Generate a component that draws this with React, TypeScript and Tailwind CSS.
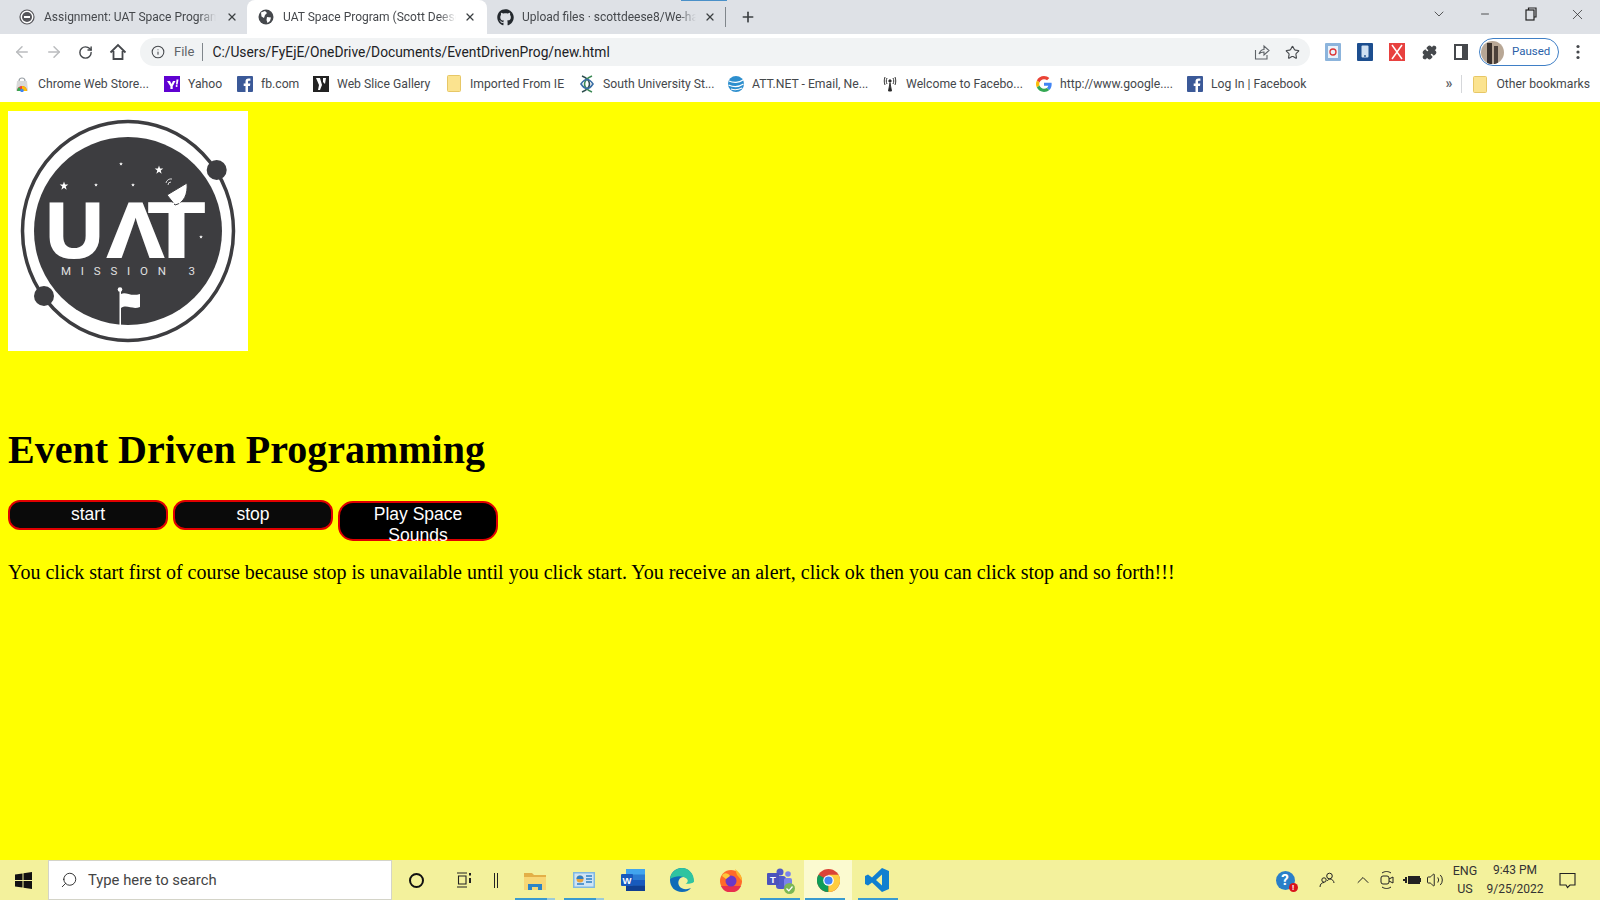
import React from "react";
import { ArrowLeft, ArrowRight, RotateCw, Info, Star, Puzzle, X, Plus, Minus, ChevronDown, ChevronUp, Search, Volume2 } from "lucide-react";
import { FaGithub } from "react-icons/fa";

const ui = "font-['Roboto','Noto_Sans',sans-serif]";

function Globe() {
  return (
    <svg width="16" height="16" viewBox="0 0 16 16">
      <circle cx="8" cy="8" r="7.5" fill="#45484c" />
      <path d="M3 3.5 L7 2 L9 4 L7 6 L6 9 L3.5 7.5 Z M9 8 L13 8.5 L12 12 L9.5 14 L8.5 11 Z" fill="#fff" />
    </svg>
  );
}

function UatTabIcon() {
  return (
    <svg width="16" height="16" viewBox="0 0 16 16">
      <circle cx="8" cy="8" r="7" fill="#fff" stroke="#55555a" strokeWidth="1.2" />
      <circle cx="8" cy="8" r="5" fill="#55555a" />
      <rect x="5" y="7" width="6" height="2" fill="#fff" />
    </svg>
  );
}

function Tab({ w, pl, gap, icon, title, active, textW, xGap }: { w: string; pl: string; gap: string; icon: React.ReactNode; title: string; active?: boolean; textW: string; xGap: string }) {
  return (
    <div className={`${w} ${pl} h-[34px] shrink-0 flex items-center ${active ? "bg-white rounded-t-lg" : ""}`}>
      <div className="shrink-0 flex">{icon}</div>
      <div className={`${textW} ${gap} overflow-hidden whitespace-nowrap text-[12px] text-[#45484c] [mask-image:linear-gradient(to_right,black_90%,transparent)]`}>{title}</div>
      <X size={12} strokeWidth={2.5} className={`${xGap} text-[#3c4043] shrink-0`} />
    </div>
  );
}

function Folder() {
  return (
    <svg width="14" height="17" viewBox="0 0 14 17">
      <rect x="0.5" y="0.5" width="13" height="16" rx="1" fill="#fbe38f" stroke="#e7c766" />
    </svg>
  );
}

function FbIcon() {
  return (
    <svg width="16" height="16" viewBox="0 0 16 16">
      <rect width="16" height="16" rx="1" fill="#3b5998" />
      <path d="M11 16 V10 H13 L13.3 7.5 H11 V6 C11 5.2 11.3 4.8 12.2 4.8 H13.4 V2.6 H11.6 C9.4 2.6 8.5 3.8 8.5 5.8 V7.5 H6.7 V10 H8.5 V16 Z" fill="#fff" />
    </svg>
  );
}

const bookmarks: { icon: React.ReactNode; label: string; w: string; ml: string }[] = [
  {
    label: "Chrome Web Store...", w: "w-[109px]", ml: "ml-[14px]",
    icon: (
      <svg width="14" height="16" viewBox="0 0 14 16">
        <path d="M2 5 L12 5 L13 15 L1 15 Z" fill="#d9d9d9" />
        <path d="M4 5 C4 1 10 1 10 5" fill="none" stroke="#9aa0a6" strokeWidth="1.2" />
        <path d="M2 15 A5 5 0 0 1 12 15 Z" fill="#ea4335" />
        <path d="M7 10 A5 5 0 0 1 12 15 L7 15 Z" fill="#fbbc05" />
        <path d="M2 15 A5 5 0 0 1 4 11 L7 15 Z" fill="#34a853" />
        <circle cx="7" cy="14.5" r="1.7" fill="#4285f4" />
      </svg>
    ),
  },
  {
    label: "Yahoo", w: "w-[33px]", ml: "ml-[17px]",
    icon: (
      <svg width="16" height="16" viewBox="0 0 16 16">
        <rect width="16" height="16" fill="#5f01d1" />
        <path d="M3 5 H6 L7.5 8 L9 5 H11.5 L8.7 10.2 V13 H6.4 V10.2 Z M12.5 3.5 H14.5 L13.6 8.5 H12 Z" fill="#fff" />
        <circle cx="12.6" cy="10" r="1" fill="#fff" />
      </svg>
    ),
  },
  { label: "fb.com", w: "w-[36px]", ml: "ml-[16px]", icon: <FbIcon /> },
  {
    label: "Web Slice Gallery", w: "w-[92px]", ml: "ml-[16px]",
    icon: (
      <svg width="16" height="16" viewBox="0 0 16 16">
        <rect width="16" height="16" fill="#222" />
        <path d="M3 2 L7 2 L9 9 L7 14 L5 14 L6 9 Z M10 2 L13 2 L12 8 L10 6 Z" fill="#fff" />
      </svg>
    ),
  },
  { label: "Imported From IE", w: "w-[93px]", ml: "ml-[17px]", icon: <Folder /> },
  {
    label: "South University St...", w: "w-[110px]", ml: "ml-[16px]",
    icon: (
      <svg width="16" height="18" viewBox="0 0 16 18" fill="none" strokeWidth="1.6">
        <path d="M3 1 C13 5 13 13 3 17" stroke="#2f4f4f" />
        <path d="M13 1 C3 5 3 13 13 17" stroke="#3c8a55" />
        <path d="M2 9 C6 3 10 3 14 9 C10 15 6 15 2 9 Z" stroke="#3a6ea5" />
      </svg>
    ),
  },
  {
    label: "ATT.NET - Email, Ne...", w: "w-[113px]", ml: "ml-[15px]",
    icon: (
      <svg width="16" height="16" viewBox="0 0 16 16">
        <circle cx="8" cy="8" r="8" fill="#2e8fce" />
        <path d="M1 5 C5 7 11 7 15 4 M0.5 9 C5 11 11 11 15.5 8 M3 13 C6 14 10 14 14 12" fill="none" stroke="#fff" strokeWidth="1.1" />
      </svg>
    ),
  },
  {
    label: "Welcome to Facebo...", w: "w-[113px]", ml: "ml-[17px]",
    icon: (
      <svg width="16" height="16" viewBox="0 0 16 16" fill="none" stroke="#333" strokeWidth="1">
        <path d="M8 7 L6.5 15 H9.5 Z" fill="#222" />
        <circle cx="8" cy="5" r="1.2" fill="#222" />
        <path d="M5 2 C4 4 4 6 5 8 M11 2 C12 4 12 6 11 8 M3 1 C2 4 2 6 3 9 M13 1 C14 4 14 6 13 9" />
      </svg>
    ),
  },
  {
    label: "http://www.google....", w: "w-[111px]", ml: "ml-[17px]",
    icon: (
      <svg width="16" height="16" viewBox="0 0 48 48">
        <path fill="#EA4335" d="M24 9.5c3.5 0 6.7 1.2 9.2 3.600l6.900-6.900C35.900 2.400 30.400 0 24 0 14.600 0 6.500 5.400 2.600 13.200l8 6.200C12.500 13.700 17.800 9.500 24 9.500z" />
        <path fill="#4285F4" d="M47 24.500c0-1.600-.1-3.100-.4-4.500H24v9h12.900c-.6 3-2.200 5.500-4.700 7.200l7.700 6C44.400 37.900 47 31.800 47 24.500z" />
        <path fill="#FBBC05" d="M10.600 28.600C10.100 27.100 9.800 25.600 9.800 24s.3-3.100.8-4.600l-8-6.200C.9 16.500 0 20.100 0 24s.9 7.500 2.600 10.800l8-6.200z" />
        <path fill="#34A853" d="M24 48c6.500 0 11.900-2.100 15.900-5.800l-7.700-6c-2.200 1.500-4.900 2.300-8.200 2.300-6.200 0-11.500-4.200-13.400-9.900l-8 6.200C6.500 42.600 14.600 48 24 48z" />
      </svg>
    ),
  },
  { label: "Log In | Facebook", w: "w-[93px]", ml: "ml-[16px]", icon: <FbIcon /> },
];

function Logo() {
  const star = (x: number, y: number, s: number) => {
    const pts: string[] = [];
    for (let i = 0; i < 10; i++) {
      const r = i % 2 === 0 ? s : s * 0.4;
      const a = -Math.PI / 2 + (i * Math.PI) / 5;
      pts.push(`${x + r * Math.cos(a)},${y + r * Math.sin(a)}`);
    }
    return <polygon points={pts.join(" ")} fill="#fff" />;
  };
  return (
    <svg width="240" height="240" viewBox="0 0 240 240" className="block bg-white">
      <ellipse cx="120" cy="120" rx="105.500" ry="109.500" fill="none" stroke="#3d3d40" strokeWidth="3.500" />
      <circle cx="120" cy="120" r="94" fill="#3d3d40" />
      <circle cx="208.700" cy="59" r="10" fill="#3d3d40" />
      <circle cx="36" cy="185" r="10" fill="#3d3d40" />
      {star(56, 75, 4.500)}
      {star(151, 59, 4.500)}
      {star(113, 53, 2)}
      {star(88, 74, 2)}
      {star(125, 74, 2)}
      {star(193, 126, 2)}
      <g fill="#fff" stroke="#fff" strokeWidth="2.200" fontFamily="'Liberation Sans', sans-serif" fontWeight="700" fontSize="77">
        <text x="38" y="146" textLength="57" lengthAdjust="spacingAndGlyphs">U</text>
        <text x="99.500" y="146" textLength="56" lengthAdjust="spacingAndGlyphs">Λ</text>
        <text x="140.500" y="146" textLength="56" lengthAdjust="spacingAndGlyphs">T</text>
      </g>
      <path d="M159 84 L179 72 C180 83 176 92 167 94 Z" fill="#fff" stroke="#3d3d40" strokeWidth="1" />
      <path d="M166 92 L160 97 M171 91 L176 97" stroke="#fff" strokeWidth="1.500" />
      <path d="M158 72 A5 5 0 0 1 164 68 M160 74 A3 3 0 0 1 163 71" fill="none" stroke="#fff" strokeWidth="0.800" />
      <text x="53" y="164" textLength="134" fill="#e0e0e0" fontFamily="'Roboto', sans-serif" fontSize="11.500">MISSION 3</text>
      <rect x="111.500" y="180" width="1.500" height="39" fill="#fff" />
      <circle cx="112" cy="178.500" r="2.300" fill="#fff" />
      <path d="M113 183 C118 180 122 186 132 183 L132 196 C124 199 119 193 113 197 Z" fill="#fff" />
    </svg>
  );
}

function Slot({ w, children, className = "" }: { w: string; children?: React.ReactNode; className?: string }) {
  return <div className={`${w} h-full shrink-0 flex items-center justify-center ${className}`}>{children}</div>;
}

function Underlined({ w, children, bar, rest, highlight }: { w: string; children: React.ReactNode; bar?: string; rest?: boolean; highlight?: boolean }) {
  return (
    <div className={`${w} h-full shrink-0 flex items-center justify-center relative ${highlight ? "bg-[#fbfad0]" : ""}`}>
      {children}
      {bar && (
        <div className={`absolute bottom-0 ${bar} h-[2px] bg-[#3a9bd0] flex justify-end`}>
          {rest && <div className="w-[8px] h-full bg-[#9ccbd8]" />}
        </div>
      )}
    </div>
  );
}

export default function App() {
  return (
    <div className={`w-[1600px] h-[900px] flex flex-col overflow-hidden ${ui}`}>
      {/* tab strip */}
      <div className="h-[34px] shrink-0 bg-[#dee1e6] flex items-center relative">
        <div className="absolute top-0 left-[681px] w-[46px] h-[1px] bg-[#4a90c8]" />
        <Tab w="w-[247px]" pl="pl-[19px]" gap="ml-[9px]" xGap="ml-[10px]" icon={<UatTabIcon />} title="Assignment: UAT Space Program" textW="w-[172px]" />
        <Tab w="w-[240px]" pl="pl-[11px]" gap="ml-[9px]" xGap="ml-[8px]" active icon={<Globe />} title="UAT Space Program (Scott Deese" textW="w-[173px]" />
        <Tab w="w-[238px]" pl="pl-[10px]" gap="ml-[8px]" xGap="ml-[8px]" icon={<FaGithub size={17} className="text-[#24292e]" />} title="Upload files · scottdeese8/We-ha" textW="w-[174px]" />
        <div className="w-[1px] h-[20px] bg-[#80868b]" />
        <Plus size={16} strokeWidth={2.5} className="ml-[14px] text-[#3c4043]" />
        <div className="flex-1" />
        <Slot w="w-[46px]"><ChevronDown size={16} strokeWidth={1.2} className="text-[#333] -mt-[6px]" /></Slot>
        <Slot w="w-[46px]"><Minus size={12} strokeWidth={1.5} className="text-[#222] -mt-[6px]" /></Slot>
        <Slot w="w-[46px]">
          <svg width="12" height="14" viewBox="0 0 12 14" fill="none" stroke="#222" strokeWidth="1.200" className="-mt-[6px]"><rect x="1" y="3" width="8" height="10" fill="#dee1e6" /><path d="M3.500 3 V1 H11 V10 H9" /></svg>
        </Slot>
        <Slot w="w-[46px]"><X size={17} strokeWidth={1} className="text-[#222] -mt-[6px]" /></Slot>
      </div>

      {/* toolbar */}
      <div className="h-[36px] shrink-0 bg-white flex items-center">
        <Slot w="w-[43px]"><ArrowLeft size={18} className="text-[#babcbe]" strokeWidth={2} /></Slot>
        <Slot w="w-[22px]"><ArrowRight size={18} className="text-[#babcbe]" strokeWidth={2} /></Slot>
        <Slot w="w-[41px]"><RotateCw size={15} className="text-[#45484c]" strokeWidth={2.300} /></Slot>
        <Slot w="w-[24px]">
          <svg width="18" height="18" viewBox="0 0 18 18" fill="none" stroke="#45484c" strokeWidth="1.800"><path d="M1.500 9.500 L9 2 L16.500 9.500 M4.500 8 V16 H13.500 V8" /></svg>
        </Slot>
        <div className="ml-[10px] w-[1170px] h-[28px] rounded-full bg-[#f1f3f4] flex items-center">
          <Info size={14} className="ml-[11px] text-[#45484c]" strokeWidth={1.800} />
          <span className="ml-[9px] text-[13px] text-[#5f6368]">File</span>
          <div className="ml-[8px] w-[1px] h-[18px] bg-[#80868b]" />
          <span className="ml-[9px] text-[13.800px] text-[#202124]">C:/Users/FyEjE/OneDrive/Documents/EventDrivenProg/new.html</span>
          <div className="flex-1" />
          <svg width="16" height="16" viewBox="0 0 16 16" fill="none" stroke="#5f6368" strokeWidth="1.100" className="mr-[15px]"><path d="M1.500 6 V15 H13 V11 M5 10 C6 7 8 5.500 10 5.500 V2 L15 6.500 L10 11 V8 C8 8 6 8.500 5 10 Z" /></svg>
          <Star size={15} className="mr-[10px] text-[#45484c]" strokeWidth={1.800} />
        </div>
        <Slot w="w-[32px] ml-[7px]">
          <svg width="16" height="18" viewBox="0 0 16 18"><rect width="16" height="18" rx="1" fill="#8cb4dc" /><rect x="3" y="3" width="10" height="12" fill="#eaf2fa" /><circle cx="8" cy="9" r="3" fill="none" stroke="#d33" strokeWidth="1.300" /></svg>
        </Slot>
        <Slot w="w-[31px]">
          <svg width="16" height="18" viewBox="0 0 16 18"><rect width="16" height="18" rx="1" fill="#1c4e8f" /><rect x="4.500" y="2.500" width="7" height="12" rx="1" fill="#cfe0f2" /><circle cx="8" cy="13" r="0.900" fill="#1c4e8f" /></svg>
        </Slot>
        <Slot w="w-[33px]">
          <svg width="16" height="18" viewBox="0 0 16 18"><rect width="16" height="18" fill="#e8413f" /><path d="M3 2 L8 9 L13 2 M3 16 L8 9 L13 16" fill="none" stroke="#fff" strokeWidth="1.500" /></svg>
        </Slot>
        <Slot w="w-[32px]"><Puzzle size={15} className="text-[#45484c] fill-[#45484c]" /></Slot>
        <Slot w="w-[32px]">
          <svg width="14" height="16" viewBox="0 0 14 16"><rect x="1" y="1" width="12" height="14" fill="#fff" stroke="#45484c" strokeWidth="2" /><rect x="8" y="1" width="5" height="14" fill="#45484c" /></svg>
        </Slot>
        <div className="ml-[2px] w-[80px] h-[28px] rounded-full border border-[#3f7fc6] flex items-center shrink-0">
          <svg width="23" height="23" viewBox="0 0 23 23" className="ml-[1px] rounded-full"><rect width="23" height="23" fill="#b8a795" /><rect x="6" y="2" width="5" height="21" fill="#3a312c" /><rect x="13" y="5" width="4" height="18" fill="#4c413a" /></svg>
          <span className="ml-[8px] text-[11.500px] text-[#2a5fa8]">Paused</span>
        </div>
        <Slot w="w-[37px]">
          <svg width="4" height="16" viewBox="0 0 4 16" fill="#45484c"><circle cx="2" cy="2.500" r="1.600" /><circle cx="2" cy="8" r="1.600" /><circle cx="2" cy="13.500" r="1.600" /></svg>
        </Slot>
      </div>

      {/* bookmarks */}
      <div className="h-[32px] shrink-0 bg-white flex items-center pb-[4px] text-[12.200px] text-[#45484c]">
        {bookmarks.map((b) => (
          <div key={b.label} className={`flex items-center shrink-0 ${b.ml}`}>
            <div className="w-[16px] flex justify-center">{b.icon}</div>
            <span className={`${b.w} ml-[8px] whitespace-nowrap`}>{b.label}</span>
          </div>
        ))}
        <div className="flex-1" />
        <span className="text-[14px] font-bold text-[#5f6368] leading-none -mt-[2px]">»</span>
        <div className="ml-[9px] w-[1px] h-[18px] bg-[#d5d7da]" />
        <div className="ml-[11px]"><Folder /></div>
        <span className="ml-[9px] mr-[10px] whitespace-nowrap">Other bookmarks</span>
      </div>

      {/* page */}
      <div className="flex-1 min-h-0 bg-[#ffff00] text-black font-['Liberation_Serif',serif] pt-[9px] px-[8px]">
        <Logo />
        <h1 className="mt-[76px] text-[40px] font-bold leading-[46px]">Event Driven Programming</h1>
        <div className="mt-[27px] flex items-start gap-[5px] font-['Liberation_Sans',sans-serif] text-white text-[17.500px] text-center">
          <button className="w-[160px] h-[30px] rounded-[12px] border-2 border-[#e00000] bg-[#0a0a0a] leading-[20px] pt-[1px] pb-[3px]">start</button>
          <button className="w-[160px] h-[30px] rounded-[12px] border-2 border-[#e00000] bg-[#0a0a0a] leading-[20px] pt-[1px] pb-[3px]">stop</button>
          <button className="mt-[1px] w-[160px] h-[40px] rounded-[15px] border-2 border-[#e00000] bg-black leading-[20.700px] self-start pt-[1px] flex flex-col items-center justify-start">
            <span className="block">Play Space</span>
            <span className="block">Sounds</span>
          </button>
        </div>
        <p className="mt-[20px] text-[20px] leading-[23px]">You click start first of course because stop is unavailable until you click start. You receive an alert, click ok then you can click stop and so forth!!!</p>
      </div>

      {/* taskbar */}
      <div className="h-[40px] shrink-0 bg-[#f3f19c] flex items-center">
        <Slot w="w-[48px] pr-[1px]">
          <svg width="17" height="17" viewBox="0 0 17 17" fill="#111"><path d="M0 2.500 L7.500 1.400 V8 H0 Z M8.500 1.200 L17 0 V8 H8.500 Z M0 9 H7.500 V15.600 L0 14.500 Z M8.500 9 H17 V17 L8.500 15.800 Z" /></svg>
        </Slot>
        <div className="w-[344px] h-[40px] bg-white border border-[#d4d4c8] flex items-center shrink-0">
          <Search size={18} strokeWidth={1.200} className="ml-[11px] text-[#222] -scale-x-100" />
          <span className="ml-[10px] text-[14.800px] text-[#444]">Type here to search</span>
        </div>
        <Slot w="w-[48px]">
          <div className="w-[15px] h-[15px] rounded-full border-[2.500px] border-[#111]" />
        </Slot>
        <Slot w="w-[48px]">
          <svg width="16" height="16" viewBox="0 0 16 16" fill="none" stroke="#222" strokeWidth="1.100"><path d="M1 1 H11 M1 15 H11 M2.500 4 H10 V12 H2.500 Z" /><rect x="13" y="1" width="2" height="2.500" fill="#222" stroke="none" /><rect x="13" y="6" width="2" height="5" fill="#222" stroke="none" /></svg>
        </Slot>
        <Slot w="w-[16px]">
          <div className="w-[4px] h-[15px] border-x border-[#222]" />
        </Slot>
        <div className="w-[7px] shrink-0" />
        <Underlined w="w-[48px]" bar="left-[4px] right-[4px]" rest>
          <svg width="22" height="19" viewBox="0 0 22 19"><path d="M0 2 H8 L10 4 H22 V8 H0 Z" fill="#e3b048" /><path d="M0 6 H22 V19 H0 Z" fill="#f8d775" /><path d="M4 13 H18 V19 H14 V16 H8 V19 H4 Z" fill="#2e84c6" /></svg>
        </Underlined>
        <Underlined w="w-[49px]" bar="left-[5px] right-[4px]" rest>
          <svg width="22" height="17" viewBox="0 0 22 17"><rect width="22" height="16" fill="#7fb8e0" /><rect x="1.500" y="1.500" width="19" height="13" fill="#cfe4f5" /><circle cx="7" cy="7" r="3.500" fill="#e8a33d" /><path d="M3.500 7 A3.500 3.500 0 0 1 10.500 7 Z" fill="#2f7fc4" /><path d="M13 4 H19 M13 7 H19 M13 10 H19 M4 12 H11" stroke="#2f7fc4" strokeWidth="1.300" /></svg>
        </Underlined>
        <Underlined w="w-[49px]">
          <svg width="24" height="22" viewBox="0 0 24 22"><rect x="5" y="0" width="19" height="22" rx="1" fill="#2b7cd3" /><rect x="5" y="0" width="19" height="5.500" fill="#41a5ee" /><rect x="5" y="11" width="19" height="5.500" fill="#185abd" /><rect x="5" y="16.500" width="19" height="5.500" fill="#103f91" /><rect x="0" y="5" width="12" height="12" rx="1" fill="#185abd" /><text x="6" y="14.500" fontSize="9.500" fontWeight="700" fill="#fff" textAnchor="middle" fontFamily="'Liberation Sans', sans-serif">W</text></svg>
        </Underlined>
        <Underlined w="w-[49px]">
          <svg width="24" height="24" viewBox="0 0 24 24">
            <path d="M23.500 14 C23.500 5 18 0 12 0 C5 0 0 5 0 12 C0 19 5 24 12 24 C16 24 19 22.500 21 20 C17 22 11 21.500 9 17.500 C7 13 10 8.500 14 9 C17 9.500 19 11 18.500 14 Z" fill="#0f6cb8" />
            <path d="M0 11 C1 4 6 0 12 0 C19 0 24 6 24 13 C24 15.500 19 16 15.500 15.500 C18 15 18.500 12 16.500 10.500 C13 7.500 6 7 0 11 Z" fill="#2fc4a0" />
          </svg>
        </Underlined>
        <Underlined w="w-[49px]">
          <svg width="24" height="24" viewBox="0 0 24 24"><circle cx="12" cy="13" r="11" fill="#ff6a2a" /><path d="M2 18 A11 11 0 0 0 22 18 Z" fill="#e8304f" /><path d="M16 1 C20 4 23 8 23 13 L18 7 Z" fill="#ffb52a" /><circle cx="12" cy="13" r="5.500" fill="#6a38c8" /><path d="M3 8 C5 4 9 5 11 8 L7 11 Z" fill="#ffc83a" /></svg>
        </Underlined>
        <Underlined w="w-[49px]" bar="left-[5px] right-[4px]">
          <div className="relative">
            <svg width="26" height="24" viewBox="0 0 26 24"><circle cx="13" cy="4" r="3.500" fill="#5059c9" /><circle cx="21" cy="6" r="2.800" fill="#7b83eb" /><rect x="9" y="8" width="10" height="13" rx="3" fill="#5059c9" /><rect x="17" y="10" width="8" height="9" rx="2" fill="#7b83eb" /><rect x="0" y="5" width="12" height="12" rx="1" fill="#4b53bc" /><text x="6" y="14.500" fontSize="9.500" fontWeight="700" fill="#fff" textAnchor="middle" fontFamily="'Liberation Sans', sans-serif">T</text></svg>
            <svg width="11" height="11" viewBox="0 0 11 11" className="absolute -right-[2px] -bottom-[2px]"><circle cx="5.500" cy="5.500" r="5.500" fill="#7cb854" /><path d="M2.500 5.500 L4.800 7.800 L8.500 3.500" fill="none" stroke="#fff" strokeWidth="1.300" /></svg>
          </div>
        </Underlined>
        <Underlined w="w-[48px]" bar="left-[1px] right-[7px]" highlight>
          <svg width="23" height="23" viewBox="0 0 48 48"><circle cx="24" cy="24" r="24" fill="#db4437" /><path d="M24 24 L3.200 12 A24 24 0 0 0 24 48 Z" fill="#0f9d58" /><path d="M24 24 L24 48 A24 24 0 0 0 44.800 12 L24 12 Z" fill="#ffcd40" /><circle cx="24" cy="24" r="11" fill="#fff" /><circle cx="24" cy="24" r="8.500" fill="#4285f4" /></svg>
        </Underlined>
        <Underlined w="w-[50px]" bar="left-[6px] right-[4px]">
          <svg width="24" height="24" viewBox="0 0 24 24"><path d="M17 0 L24 3 V21 L17 24 L7 14.500 L3 17.500 L0 16 V8 L3 6.500 L7 9.500 Z M17 6.500 L11 12 L17 17.500 Z" fill="#0f7fd0" fillRule="evenodd" /></svg>
        </Underlined>
        <div className="flex-1" />
        <Slot w="w-[30px]">
          <div className="relative">
            <div className="w-[19px] h-[19px] rounded-full bg-[#2a7fc8] text-white text-[15px] font-bold leading-[19px] text-center">?</div>
            <div className="absolute -right-[3px] -bottom-[2px] w-[9px] h-[9px] rounded-full bg-[#d8141c] text-white text-[8px] font-bold leading-[9px] text-center">!</div>
          </div>
        </Slot>
        <Slot w="w-[30px] ml-[12px]">
          <svg width="16" height="16" viewBox="0 0 16 16" fill="none" stroke="#222" strokeWidth="1"><circle cx="10.500" cy="4" r="2.800" /><circle cx="5" cy="8" r="2.200" /><path d="M1 15 C1 12 3 10.500 5 10.500 M8 9 C9 8 10 7 11 7 C13 7 15 9 15 11" /></svg>
        </Slot>
        <Slot w="w-[22px] ml-[10px]"><ChevronUp size={20} strokeWidth={1.200} className="text-[#222]" /></Slot>
        <Slot w="w-[26px]">
          <svg width="16" height="20" viewBox="0 0 16 20" fill="none" stroke="#222" strokeWidth="1"><rect x="2" y="6" width="8" height="8" rx="2" /><path d="M10 9 L14 7 V13 L10 11 M3 3 C6 1 9 1 12 3 M3 17 C6 19 9 19 12 17" /></svg>
        </Slot>
        <Slot w="w-[24px]">
          <svg width="18" height="12" viewBox="0 0 18 12"><rect x="5" y="2" width="12" height="8" fill="#222" /><rect x="17" y="4" width="1" height="4" fill="#222" /><path d="M0 5 H2 V3 H4 V9 H2 V7 H0 Z" fill="#222" /></svg>
        </Slot>
        <Slot w="w-[22px]"><Volume2 size={18} strokeWidth={1.300} className="text-[#222]" /></Slot>
        <div className="w-[36px] ml-[1px] shrink-0 flex flex-col items-center text-[12.500px] leading-[18px] text-[#333]">
          <span>ENG</span>
          <span>US</span>
        </div>
        <div className="w-[64px] shrink-0 flex flex-col items-center text-[12px] leading-[19px] text-[#333]">
          <span>9:43 PM</span>
          <span>9/25/2022</span>
        </div>
        <Slot w="w-[40px]">
          <svg width="17" height="17" viewBox="0 0 17 17" fill="none" stroke="#222" strokeWidth="1.100"><path d="M1 1.500 H16 V13 H11 L8.500 15.500 L7 13 H1 Z" /></svg>
        </Slot>
        <div className="w-[13px] shrink-0" />
      </div>
    </div>
  );
}
